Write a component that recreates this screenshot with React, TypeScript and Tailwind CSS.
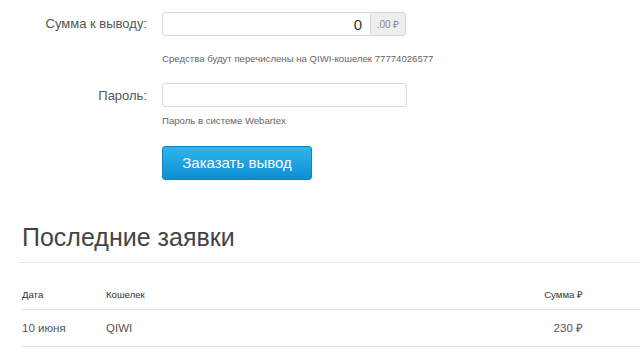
export default function App() {
  return (
    <div className="w-[640px] h-[360px] overflow-hidden bg-white text-[#333] font-['Liberation_Sans',Arial,sans-serif]">
      <div className="pt-3">
        <div className="flex items-center">
          <label className="w-[147px] text-right text-[13px] text-[#555]">Сумма к выводу:</label>
          <div className="ml-[15px] flex h-[24px]">
            <input
              readOnly
              value="0"
              className="w-[208px] h-full rounded-l-[3px] border border-[#d5dbe0] border-r-0 px-2 text-right text-[15px] text-[#333] outline-none"
            />
            <span className="w-[36px] h-full flex items-center justify-center rounded-r-[3px] border border-[#d5dbe0] bg-[#eeeeee] text-[10px] text-[#888]">
              .00 ₽
            </span>
          </div>
        </div>
        <p className="ml-[162px] mt-[16px] text-[9.6px] text-[#666]">
          Средства будут перечислены на QIWI-кошелек 77774026577
        </p>
        <div className="flex items-center mt-[17px]">
          <label className="w-[147px] text-right text-[13px] text-[#555]">Пароль:</label>
          <input
            type="password"
            className="ml-[15px] w-[245px] h-[24px] rounded-[3px] border border-[#d5dbe0] outline-none"
          />
        </div>
        <p className="ml-[162px] mt-[7px] text-[9.6px] text-[#666]">Пароль в системе Webartex</p>
        <button className="ml-[162px] mt-[17px] w-[150px] h-[34px] rounded-[3px] bg-gradient-to-b from-[#2fb4ec] to-[#0a8fd3] border border-[#0a86c6] text-white text-[15px]">
          Заказать вывод
        </button>
      </div>
      <h2 className="ml-[22px] mt-[42px] text-[25px] leading-[30px] text-[#444]">Последние заявки</h2>
      <div className="ml-[20px] mt-[10px] border-t border-[#e4e4e4]" />
      <table className="ml-[22px] mt-[24px] w-[618px] border-collapse text-[9.6px]">
        <thead>
          <tr className="border-b border-[#e4e4e4]">
            <th className="w-[84px] h-[23px] pb-[6px] text-left font-normal text-[#333]">Дата</th>
            <th className="text-left pb-[6px] font-normal text-[#333]">Кошелек</th>
            <th className="text-right pb-[6px] pr-[57px] font-normal text-[#333]">Сумма ₽</th>
          </tr>
        </thead>
        <tbody>
          <tr className="border-b border-[#e4e4e4]">
            <td className="h-[37px] text-[11.5px] text-[#555]">10 июня</td>
            <td className="text-[11.5px] text-[#555]">QIWI</td>
            <td className="text-right pr-[57px] text-[11.5px] text-[#555]">230 ₽</td>
          </tr>
        </tbody>
      </table>
    </div>
  );
}
